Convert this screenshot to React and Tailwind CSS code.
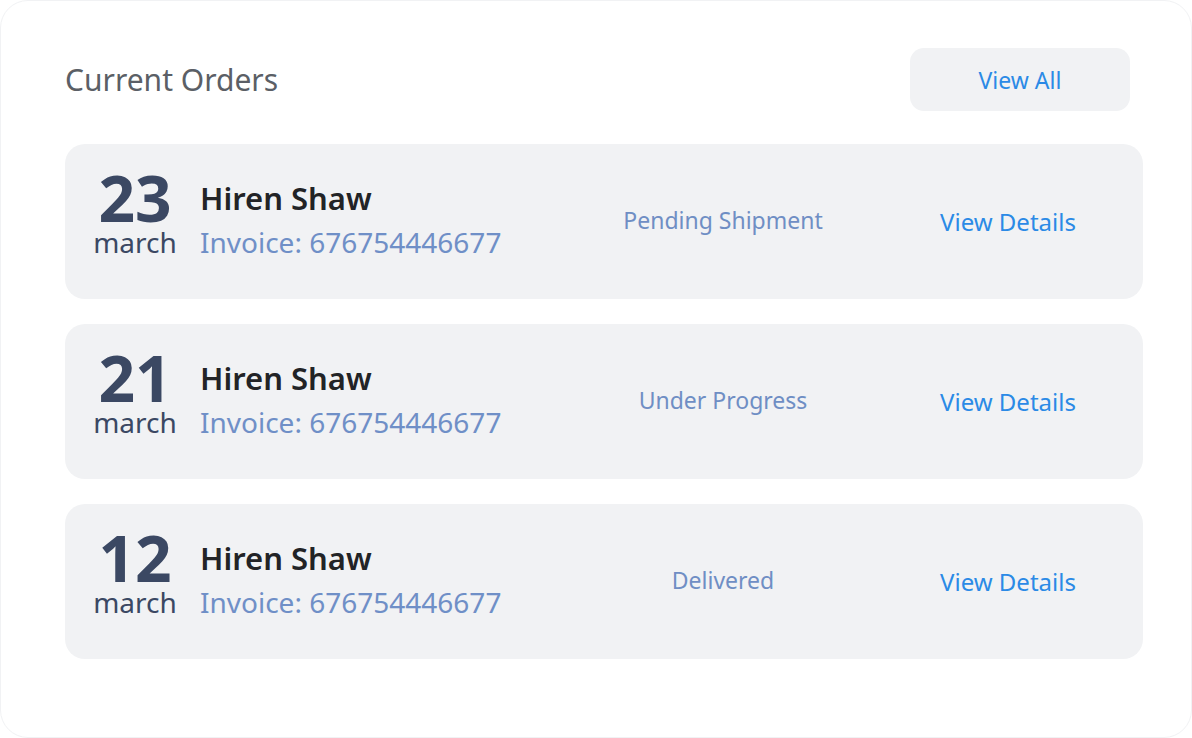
import React from "react";

const orders = [
  { day: "23", month: "march", name: "Hiren Shaw", invoice: "Invoice: 676754446677", status: "Pending Shipment" },
  { day: "21", month: "march", name: "Hiren Shaw", invoice: "Invoice: 676754446677", status: "Under Progress" },
  { day: "12", month: "march", name: "Hiren Shaw", invoice: "Invoice: 676754446677", status: "Delivered" },
];

export default function App() {
  return (
    <div
      className="w-[1192px] h-[738px] bg-white rounded-[28px] border border-[#f1f2f4] pl-[64px] pr-[48px] pt-[47px]"
      style={{ fontFamily: '"Noto Sans", "Open Sans", sans-serif' }}
    >
      <div className="flex items-center justify-between pr-[13px]">
        <h1 className="text-[30px] leading-none text-[#5b5f66]">Current Orders</h1>
        <button className="w-[220px] h-[63px] rounded-[14px] bg-[#f1f2f4] text-[23px] leading-none text-[#2b8ae6] pt-[2px]">
          View All
        </button>
      </div>
      <div className="mt-[33px] flex flex-col gap-[25px]">
        {orders.map((o, i) => (
          <div key={i} className="h-[155px] rounded-[20px] bg-[#f1f2f4] flex items-center pl-[29px] pr-[35px]">
            <div className="w-[82px] flex flex-col items-center mb-[19px]">
              <span className="text-[64px] font-bold leading-[60px] text-[#3b4863]">{o.day}</span>
              <span className="text-[28px] leading-[28px] text-[#3b4863]">{o.month}</span>
            </div>
            <div className="flex-1 ml-[24px] flex flex-col mb-[3px]">
              <span className="text-[31px] font-semibold leading-[44px] text-[#222326]">{o.name}</span>
              <span className="text-[28px] leading-[44px] text-[#6f8fc7]">{o.invoice}</span>
            </div>
            <div className="w-[250px] text-center text-[23px] leading-[32px] text-[#6f8ec4] mb-[3px]">{o.status}</div>
            <div className="w-[200px] ml-[60px] text-center text-[24px] leading-[32px] text-[#2b8ae6]">View Details</div>
          </div>
        ))}
      </div>
    </div>
  );
}
